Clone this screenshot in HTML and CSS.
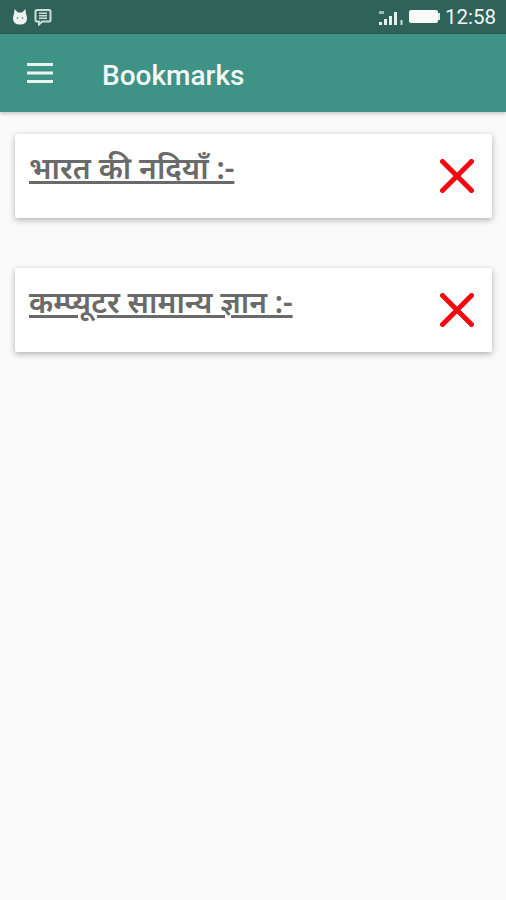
FILE: index.html
```html
<!DOCTYPE html>
<html lang="hi">
<head>
    <meta charset="UTF-8">
    <meta name="viewport" content="width=device-width, initial-scale=1.0">
    <title>Bookmarks</title>
    <link rel="stylesheet" href="styles.css">
</head>
<body>

<!-- Status bar -->
<div class="status-bar">
    <div class="status-left">
        <svg width="16" height="18" viewBox="0 0 16 18">
            <path d="M2.500 1 L6 4.500 H10 L13.500 1 L14 6 Q15 8 15 10.500 Q15 16.500 8 16.500 Q1 16.500 1 10.500 Q1 8 2 6 Z" fill="#eef3f1"/>
            <circle cx="5.500" cy="10" r="1" fill="#7fa399"/>
            <circle cx="10.500" cy="10" r="1" fill="#7fa399"/>
        </svg>
        <svg width="18" height="18" viewBox="0 0 18 18">
            <path d="M3 2 H15 Q16.500 2 16.500 3.500 V12 Q16.500 13.500 15 13.500 H8 L5 16.500 V13.500 H3 Q1.500 13.500 1.500 12 V3.500 Q1.500 2 3 2 Z" fill="none" stroke="#cfdcd8" stroke-width="2"/>
            <path d="M5 5.300 H13 M5 7.800 H13 M5 10.300 H13" stroke="#cfdcd8" stroke-width="1.400"/>
        </svg>
    </div>
    <div class="status-right">
        <svg width="26" height="18" viewBox="0 0 26 18">
            <path d="M1 3 H6 V6 H1 Z" fill="#9fbab2"/>
            <path d="M1 14 H4 V17 H1 Z M6 11 H9 V17 H6 Z M11 8 H14 V17 H11 Z M16 4 H19 V17 H16 Z" fill="#e6eeeb"/>
            <path d="M22.500 12 H24.500 V17 H22.500 Z" fill="#cfdcd8"/>
        </svg>
        <div class="battery"></div>
        <span class="clock">12:58</span>
    </div>
</div>

<!-- App bar -->
<div class="app-bar">
    <svg class="menu-icon" width="26" height="20" viewBox="0 0 26 20">
        <path d="M0 1.500 H26 M0 10 H26 M0 18.500 H26" stroke="#e8f4f1" stroke-width="3"/>
    </svg>
    <h1>Bookmarks</h1>
</div>

<!-- Bookmark list -->
<div class="list">
    <div class="card">
        <span class="card-title">भारत की नदियाँ :-</span>
        <svg class="remove" width="34" height="34" viewBox="0 0 34 34">
            <path d="M2.500 2.500 L31.500 31.500 M31.500 2.500 L2.500 31.500" stroke="#f5080f" stroke-width="5" stroke-linecap="round"/>
        </svg>
    </div>
    <div class="card">
        <span class="card-title">कम्प्यूटर सामान्य ज्ञान :-</span>
        <svg class="remove" width="34" height="34" viewBox="0 0 34 34">
            <path d="M2.500 2.500 L31.500 31.500 M31.500 2.500 L2.500 31.500" stroke="#f5080f" stroke-width="5" stroke-linecap="round"/>
        </svg>
    </div>
</div>

</body>
</html>
```

FILE: styles.css
```css
body {
    font-family: Roboto, "Noto Sans", sans-serif;
    margin: 0;
    padding: 0;
    height: 900px;
    overflow: hidden;
    background-color: #fafafa;
    color: #616161;
}

.status-bar {
    display: flex;
    justify-content: space-between;
    align-items: center;
    height: 33px;
    padding: 0 10px 0 12px;
    background-color: #2f6259;
    border-bottom: 1px solid #2c5c53;
}

.status-left {
    display: flex;
    align-items: center;
    gap: 6px;
}

.status-right {
    display: flex;
    align-items: center;
    gap: 5px;
}

.battery {
    position: relative;
    width: 29px;
    height: 13px;
    margin-right: 2px;
    background-color: #f7faf9;
    border-radius: 2px;
}

.battery::after {
    content: "";
    position: absolute;
    right: -2px;
    top: 3px;
    width: 2px;
    height: 7px;
    background-color: #dfe9e6;
}

.clock {
    font-size: 20.500px;
    color: #f2f6f5;
}

.app-bar {
    display: flex;
    align-items: center;
    height: 78px;
    padding-left: 27px;
    background-color: #3f9286;
    box-shadow: 0 2px 4px rgba(0, 0, 0, 0.2);
    position: relative;
}

.menu-icon {
    margin-top: -1px;
}

.app-bar h1 {
    margin: 4px 0 0 49px;
    font-size: 28px;
    font-weight: 500;
    color: #f1f8f6;
}

.list {
    display: flex;
    flex-direction: column;
    gap: 50px;
    padding: 22px 14px 0 15px;
}

.card {
    display: flex;
    justify-content: space-between;
    align-items: flex-start;
    height: 84px;
    padding: 0 18px 0 14px;
    background-color: #fff;
    border-radius: 2px;
    box-shadow: 0 2px 6px rgba(0, 0, 0, 0.3);
}

.card-title {
    margin-top: 14px;
    font-family: "Noto Sans", sans-serif;
    font-size: 30px;
    line-height: 40px;
    font-weight: 600;
    color: #6a6a6a;
    text-decoration: underline;
}

.remove {
    margin-top: 25px;
}
```
